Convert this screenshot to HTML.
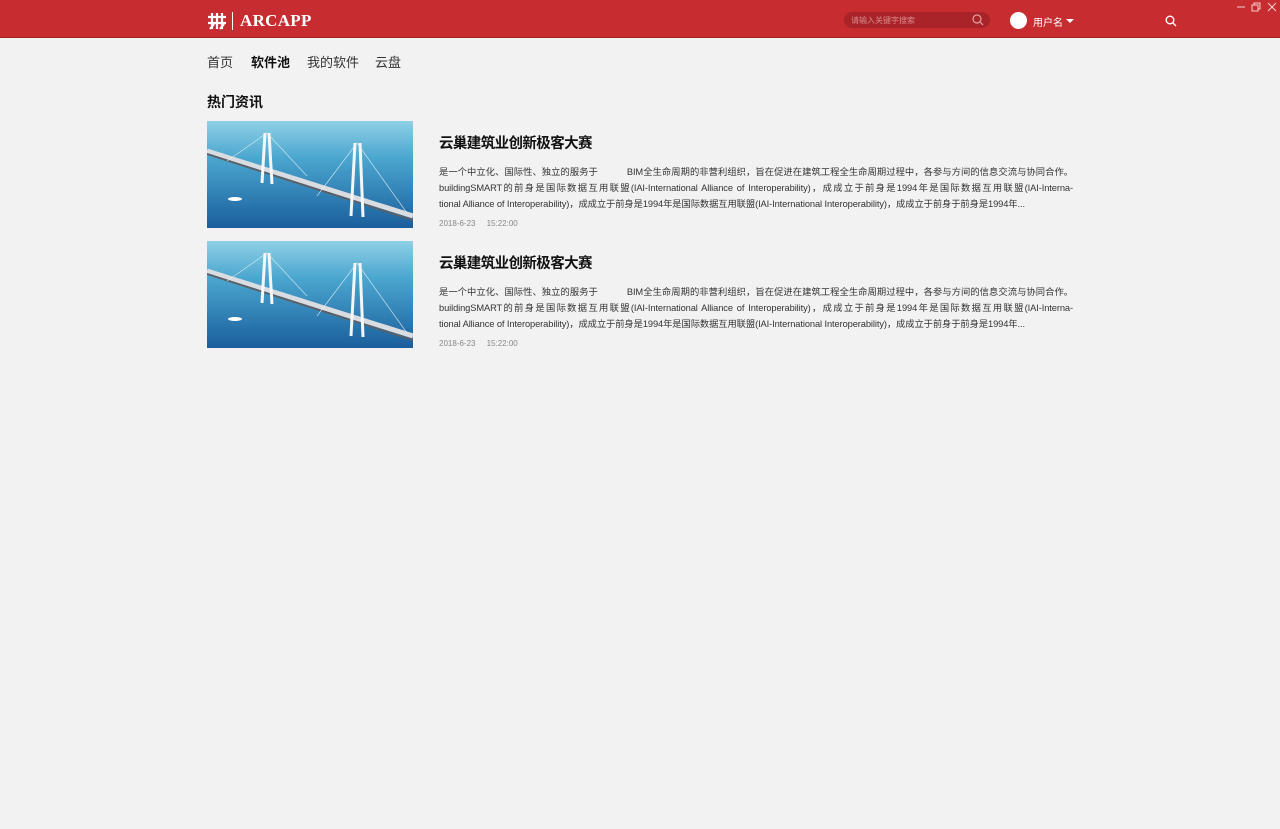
<!DOCTYPE html>
<html><head><meta charset="utf-8"><style>
*{margin:0;padding:0;box-sizing:border-box}
body{width:1280px;height:829px;background:#f2f2f2;font-family:"Liberation Sans","Noto Sans CJK SC",sans-serif;position:relative;overflow:hidden}
.top{position:absolute;left:0;top:0;width:1280px;height:38px;background:#c72c30;border-bottom:1px solid #a82226}
.abs{position:absolute}
.nav{position:absolute;top:52px;font-size:13px;color:#333}
.item{position:absolute;left:207px;width:866px;height:107px}
.img{position:absolute;left:0;top:0;width:206px;height:107px}
.title{position:absolute;left:232px;top:11px;font-size:14.5px;font-weight:bold;color:#111;letter-spacing:-0.6px}
.txt{position:absolute;left:232px;top:43px;width:634px;font-size:9.3px;line-height:16px;color:#333;letter-spacing:-0.1px}
.txt div{white-space:nowrap;text-align:justify;text-align-last:justify;overflow:hidden}
.txt div.l{text-align-last:left}
.date{position:absolute;left:232px;top:98px;font-size:8px;color:#888}
</style></head><body>
<div class="top">
  <svg class="abs" style="left:207px;top:12px" width="20" height="18" viewBox="0 0 20 18" fill="none" stroke="#fff" stroke-width="2.2"><path d="M1 5h18M1 11h18M5 1v16M10 1v16M15 1v16M3 17l4-5M13 17l4-5"/></svg>
  <div class="abs" style="left:232px;top:12px;width:1px;height:18px;background:#fff"></div>
  <div class="abs" style="left:240px;top:11px;font-family:'Liberation Serif',serif;font-weight:bold;font-size:17px;color:#fff;letter-spacing:0.3px">ARCAPP</div>
  <div class="abs" style="left:844px;top:12px;width:146px;height:16px;border-radius:8px;background:#a82428"></div>
  <div class="abs" style="left:851px;top:15px;font-size:8px;color:#d98a8c">请输入关键字搜索</div>
  <svg class="abs" style="left:972px;top:14px" width="12" height="12" viewBox="0 0 12 12" fill="none" stroke="#e2a0a2" stroke-width="1.2"><circle cx="5" cy="5" r="4"/><path d="M8 8l3 3"/></svg>
  <div class="abs" style="left:1010px;top:12px;width:17px;height:17px;border-radius:50%;background:#fff"></div>
  <div class="abs" style="left:1033px;top:14px;font-size:10px;color:#fff">用户名</div>
  <div class="abs" style="left:1066px;top:19px;width:0;height:0;border-left:4px solid transparent;border-right:4px solid transparent;border-top:4px solid #fff"></div>
  <svg class="abs" style="left:1165px;top:15px" width="12" height="12" viewBox="0 0 12 12" fill="none" stroke="#fff" stroke-width="1.4"><circle cx="5" cy="5" r="3.8"/><path d="M8 8l3 3"/></svg>
  <svg class="abs" style="left:1236px;top:2px" width="42" height="10" viewBox="0 0 42 10" fill="none" stroke="#f5d0d0" stroke-width="1"><path d="M1 5h8M16 3h6v6h-6zM18 3V1h6v6h-2M32 1l8 8M40 1l-8 8"/></svg>
</div>
<div class="nav" style="left:207px">首页</div>
<div class="nav" style="left:251px;font-weight:bold;color:#111">软件池</div>
<div class="nav" style="left:307px">我的软件</div>
<div class="nav" style="left:375px">云盘</div>
<div class="abs" style="left:207px;top:92px;font-size:14px;font-weight:bold;color:#111">热门资讯</div>

<div class="item" style="top:121px">
  <svg class="img" viewBox="0 0 206 107" preserveAspectRatio="none"><defs><linearGradient id="g" x1="0" y1="0" x2="0" y2="1"><stop offset="0" stop-color="#8fd0e6"/><stop offset="0.35" stop-color="#4aa6cf"/><stop offset="1" stop-color="#1a5e9c"/></linearGradient></defs><rect width="206" height="107" fill="url(#g)"/><path d="M0 30 L206 95" stroke="#d9dde2" stroke-width="5"/><path d="M0 33 L206 99" stroke="#5a6068" stroke-width="2"/><path d="M58 12 L55 62 M62 12 L65 63 M148 22 L144 95 M153 22 L156 96" stroke="#f4f6f8" stroke-width="3"/><path d="M60 12 L20 40 M60 12 L100 55 M150 22 L110 75 M150 22 L200 92" stroke="#e8f1f6" stroke-width="0.7" opacity="0.8"/><ellipse cx="28" cy="78" rx="7" ry="2" fill="#fff"/></svg>
  <div class="title">云巢建筑业创新极客大赛</div>
  <div class="txt"><div>是一个中立化、国际性、独立的服务于&nbsp;&nbsp;&nbsp;&nbsp;&nbsp;&nbsp;&nbsp;&nbsp;&nbsp;&nbsp; BIM全生命周期的非营利组织，旨在促进在建筑工程全生命周期过程中，各参与方间的信息交流与协同合作。</div><div>buildingSMART的前身是国际数据互用联盟(IAI-International Alliance of Interoperability)，成成立于前身是1994年是国际数据互用联盟(IAI-Interna-</div><div class="l">tional Alliance of Interoperability)，成成立于前身是1994年是国际数据互用联盟(IAI-International Interoperability)，成成立于前身于前身是1994年...</div></div>
  <div class="date">2018-6-23&nbsp;&nbsp;&nbsp;&nbsp; 15:22:00</div>
</div>
<div class="item" style="top:241px">
  <svg class="img" viewBox="0 0 206 107" preserveAspectRatio="none"><rect width="206" height="107" fill="url(#g)"/><path d="M0 30 L206 95" stroke="#d9dde2" stroke-width="5"/><path d="M0 33 L206 99" stroke="#5a6068" stroke-width="2"/><path d="M58 12 L55 62 M62 12 L65 63 M148 22 L144 95 M153 22 L156 96" stroke="#f4f6f8" stroke-width="3"/><path d="M60 12 L20 40 M60 12 L100 55 M150 22 L110 75 M150 22 L200 92" stroke="#e8f1f6" stroke-width="0.7" opacity="0.8"/><ellipse cx="28" cy="78" rx="7" ry="2" fill="#fff"/></svg>
  <div class="title">云巢建筑业创新极客大赛</div>
  <div class="txt"><div>是一个中立化、国际性、独立的服务于&nbsp;&nbsp;&nbsp;&nbsp;&nbsp;&nbsp;&nbsp;&nbsp;&nbsp;&nbsp; BIM全生命周期的非营利组织，旨在促进在建筑工程全生命周期过程中，各参与方间的信息交流与协同合作。</div><div>buildingSMART的前身是国际数据互用联盟(IAI-International Alliance of Interoperability)，成成立于前身是1994年是国际数据互用联盟(IAI-Interna-</div><div class="l">tional Alliance of Interoperability)，成成立于前身是1994年是国际数据互用联盟(IAI-International Interoperability)，成成立于前身于前身是1994年...</div></div>
  <div class="date">2018-6-23&nbsp;&nbsp;&nbsp;&nbsp; 15:22:00</div>
</div>
</body></html>
